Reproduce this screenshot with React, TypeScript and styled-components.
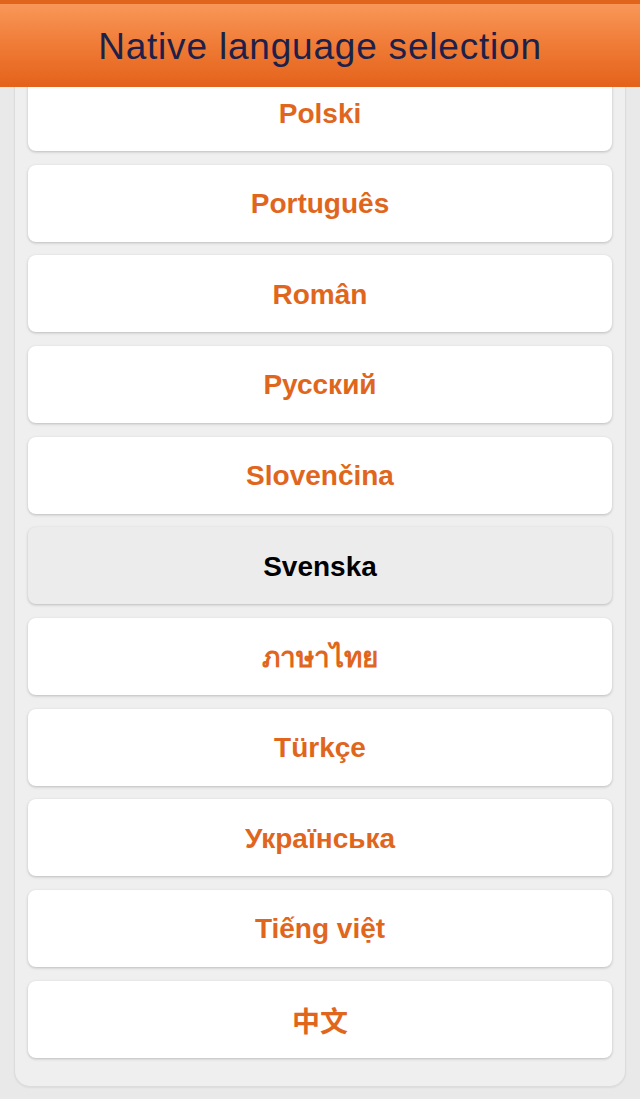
import React, { ReactElement } from 'react'
import styled, { createGlobalStyle } from 'styled-components'

const GlobalStyle = createGlobalStyle`
  html, body {
    margin: 0;
    padding: 0;
    background: #e9e9e9;
    font-family: 'Liberation Sans', Arial, 'Noto Sans CJK SC', sans-serif;
  }
`

const Header = styled.header`
  position: fixed;
  top: 0;
  left: 0;
  right: 0;
  height: 87px;
  box-sizing: border-box;
  border-top: 4px solid #e0651b;
  background: linear-gradient(to bottom, #f99758 0%, #ef7b36 50%, #e4621a 100%);
  display: flex;
  align-items: center;
  justify-content: center;
  z-index: 10;
`

const Title = styled.h1`
  margin: 0;
  padding-top: 2px;
  font-size: 37px;
  font-weight: 400;
  color: #1d2149;
  letter-spacing: 0.8px;
`

const Page = styled.main`
  padding: 60px 14px 14px;
`

const Panel = styled.div`
  display: flex;
  flex-direction: column;
  gap: 13.67px;
  padding: 14px 13px 28px;
  background: #efefef;
  border: 1px solid #dcdcdc;
  border-top: none;
  border-radius: 0 0 16px 16px;
  box-shadow: 0 1px 2px rgb(0 0 0 / 6%);
`

const LanguageButton = styled.button<{ $active?: boolean }>`
  height: 77px;
  padding: 2px 0 0;
  border: none;
  border-radius: 8px;
  background: ${p => (p.$active ? '#ececec' : '#ffffff')};
  color: ${p => (p.$active ? '#000000' : '#e0661d')};
  box-shadow: 0 1px 3px rgb(0 0 0 / 22%);
  font-family: 'Liberation Sans', Arial, 'Noto Sans', 'Noto Sans CJK SC', sans-serif;
  font-size: 28px;
  font-weight: 700;
  display: flex;
  align-items: center;
  justify-content: center;
  cursor: pointer;
`

const languages = [
  'Polski',
  'Português',
  'Român',
  'Русский',
  'Slovenčina',
  'Svenska',
  'ภาษาไทย',
  'Türkçe',
  'Українська',
  'Tiếng việt',
  '中文',
]

const App = (): ReactElement => (
  <>
    <GlobalStyle />
    <Header>
      <Title>Native language selection</Title>
    </Header>
    <Page>
      <Panel>
        {languages.map(lang => (
          <LanguageButton key={lang} $active={lang === 'Svenska'}>
            {lang}
          </LanguageButton>
        ))}
      </Panel>
    </Page>
  </>
)

export default App
